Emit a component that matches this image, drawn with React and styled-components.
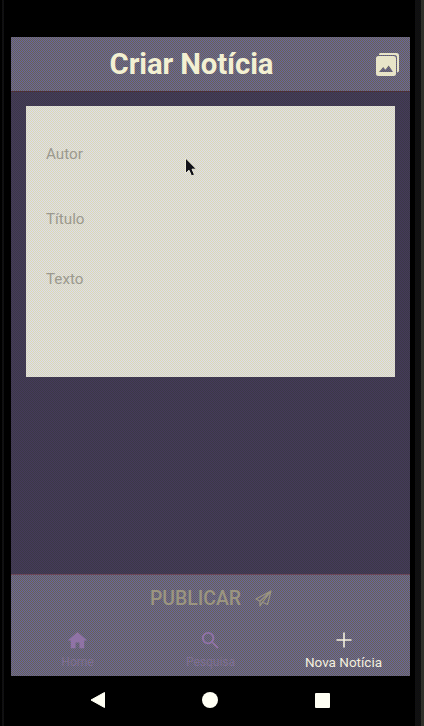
import React from "react";
import styled, { createGlobalStyle } from "styled-components";

const dither = (a, b, y = 0) => `repeating-conic-gradient(${a} 0 25%, ${b} 0 50%) 0 ${y}px / 2px 2px`;
const bar = dither("#6862a4", "#69664e");

const Global = createGlobalStyle`
  * { box-sizing: border-box; }
  body { margin: 0; background: #000; font-family: Roboto, sans-serif; }
`;
const Device = styled.div`
  position: relative;
  width: 424px;
  height: 726px;
  padding: 37px 14px 0 11px;
  background: #000;
  overflow: hidden;
`;
const Bezel = styled.div`
  position: absolute;
  top: 0;
  bottom: 0;
  left: ${(p) => p.$x}px;
  width: ${(p) => p.$w}px;
  background: ${(p) => p.$fill};
`;
const Screen = styled.main`
  height: 639px;
  display: flex;
  flex-direction: column;
  background: ${dither("#46395c", "#3b3a46")};
`;
const Header = styled.header`
  height: 55px;
  flex: none;
  display: grid;
  grid-template-columns: 38px 1fr 38px;
  align-items: center;
  background: ${bar};
  border-bottom: 1px solid #4b2f38;
`;
const Title = styled.h1`
  grid-column: 2;
  margin: 0;
  padding-right: 38px;
  text-align: center;
  font-size: 29.3px;
  line-height: 54px;
  font-weight: 700;
  letter-spacing: -0.1px;
  white-space: nowrap;
  color: #f3f0d2;
`;
const Gallery = styled.svg`
  width: 25px;
  height: 25px;
  margin-left: 3px;
  color: #e8e4c8;
`;
const Card = styled.form`
  height: 271px;
  flex: none;
  margin: 14px 15px 0;
  padding: 38px 20px 0;
  background: ${dither("#dcdaee", "#dcdbb0")};
`;
const Field = styled.div`
  height: ${(p) => p.$h}px;
  font-size: 15.2px;
  line-height: 20px;
  color: #9b998e;
`;
const Publish = styled.button`
  display: flex;
  flex: none;
  justify-content: center;
  align-items: center;
  gap: 14px;
  height: 48px;
  margin-top: auto;
  padding: 0 0 0 1px;
  border: 0;
  border-top: 1px solid #6b4658;
  background: ${bar};
  color: #9b9580;
  font: 500 19.4px Roboto, sans-serif;
`;
const Plane = styled.svg`
  width: 17px;
  height: 17px;
`;
const Tabs = styled.nav`
  height: 54px;
  flex: none;
  display: grid;
  grid-template-columns: repeat(3, 1fr);
  background: ${dither("#6862a4", "#69664e", 1)};
`;
const Tab = styled.div`
  display: flex;
  flex-direction: column;
  align-items: center;
  padding-top: ${(p) => (p.$active ? 6 : 7)}px;
  font-size: ${(p) => (p.$active ? 13.5 : 12)}px;
  line-height: 17px;
  color: ${(p) => (p.$active ? "#f3efde" : "#7f7090")};
`;
const TabIcon = styled.svg`
  width: ${(p) => (p.$active ? 24 : 23)}px;
  height: ${(p) => (p.$active ? 24 : 23)}px;
  margin-bottom: 2px;
  color: ${(p) => (p.$active ? "#f3efde" : "#9073a6")};
`;
const SystemBar = styled.footer`
  height: 50px;
  display: flex;
  justify-content: space-between;
  align-items: center;
  padding: 0 80px 3px 79px;
`;
const SystemIcon = styled.svg`
  width: 16px;
  height: 18px;
  fill: #fffff4;
`;
const Pointer = styled.svg`
  position: absolute;
  left: 184px;
  top: 157px;
  width: 14px;
  height: 21px;
`;

const tabs = [
  { label: "Home", path: "M10 20v-6h4v6h5v-8h3L12 3 2 12h3v8z" },
  {
    label: "Pesquisa",
    path: "M15.5 14h-.79l-.28-.27A6.47 6.47 0 0 0 16 9.5 6.5 6.5 0 1 0 9.5 16c1.61 0 3.09-.59 4.23-1.57l.27.28v.79l5 4.99L20.49 19zM9.5 14a4.5 4.5 0 1 1 0-9 4.5 4.5 0 0 1 0 9z",
  },
  { label: "Nova Notícia", path: "M11.2 4.5h1.6v6.7h6.7v1.6h-6.7v6.7h-1.6v-6.7H4.500v-1.6h6.7z", active: true },
];

export default function App() {
  return (
    <>
      <Global />
      <Device>
        <Bezel $x={2} $w={2} $fill={dither("#0b0b18", "#15150a")} />
        <Bezel $x={415} $w={6} $fill={dither("#15150a", "#0b0b18")} />
        <Bezel $x={421} $w={3} $fill={dither("#33331f", "#2c2c34")} />
        <Screen>
          <Header>
            <Title>Criar Notícia</Title>
            <Gallery viewBox="0 0 25 25" fill="currentColor">
              <path d="M5 1h16.5A2.5 2.5 0 0 1 24 3.500V18.500a2 2 0 0 1-2 2V5.500A2.500 2.500 0 0 0 19.500 3H4a2 2 0 0 1 1-2z" />
              <path fillRule="evenodd" d="M3.500 4h15A2.500 2.500 0 0 1 21 6.500v15a2.500 2.500 0 0 1-2.500 2.500h-15A2.500 2.500 0 0 1 1 21.500v-15A2.500 2.500 0 0 1 3.500 4zM4 20h14l-4.300-6.500-3.300 4.300-2.200-2.800z" />
            </Gallery>
          </Header>
          <Card>
            <Field $h={65}>Autor</Field>
            <Field $h={60}>Título</Field>
            <Field $h={40}>Texto</Field>
          </Card>
          <Publish type="button">
            PUBLICAR
            <Plane viewBox="0 0 17 17" fill="none" stroke="currentColor" strokeWidth="1.2" strokeLinejoin="round">
              <path d="M16 1 1 9l4 2.200zM16 1 7.500 12.200l5 2.300zM5 11.200V16l2.500-3.800" />
            </Plane>
          </Publish>
          <Tabs>
            {tabs.map((t) => (
              <Tab key={t.label} $active={t.active}>
                <TabIcon $active={t.active} viewBox="0 0 24 24" fill="currentColor">
                  <path d={t.path} />
                </TabIcon>
                {t.label}
              </Tab>
            ))}
          </Tabs>
        </Screen>
        <SystemBar>
          <SystemIcon viewBox="0 0 16 18"><path d="M14.500 1.500v15L1 9z" stroke="#fffff4" strokeLinejoin="round" /></SystemIcon>
          <SystemIcon viewBox="0 0 16 18"><circle cx="8" cy="9" r="8" /></SystemIcon>
          <SystemIcon viewBox="0 0 16 18"><rect x="1" y="2" width="15" height="15" rx="1" /></SystemIcon>
        </SystemBar>
        <Pointer viewBox="0 0 14 21">
          <path d="M1.500 1v15.500l3.500-3.300 2.500 5.800 3-1.300-2.500-5.500h4.500z" fill="#111118" stroke="#ecead8" />
        </Pointer>
      </Device>
    </>
  );
}
